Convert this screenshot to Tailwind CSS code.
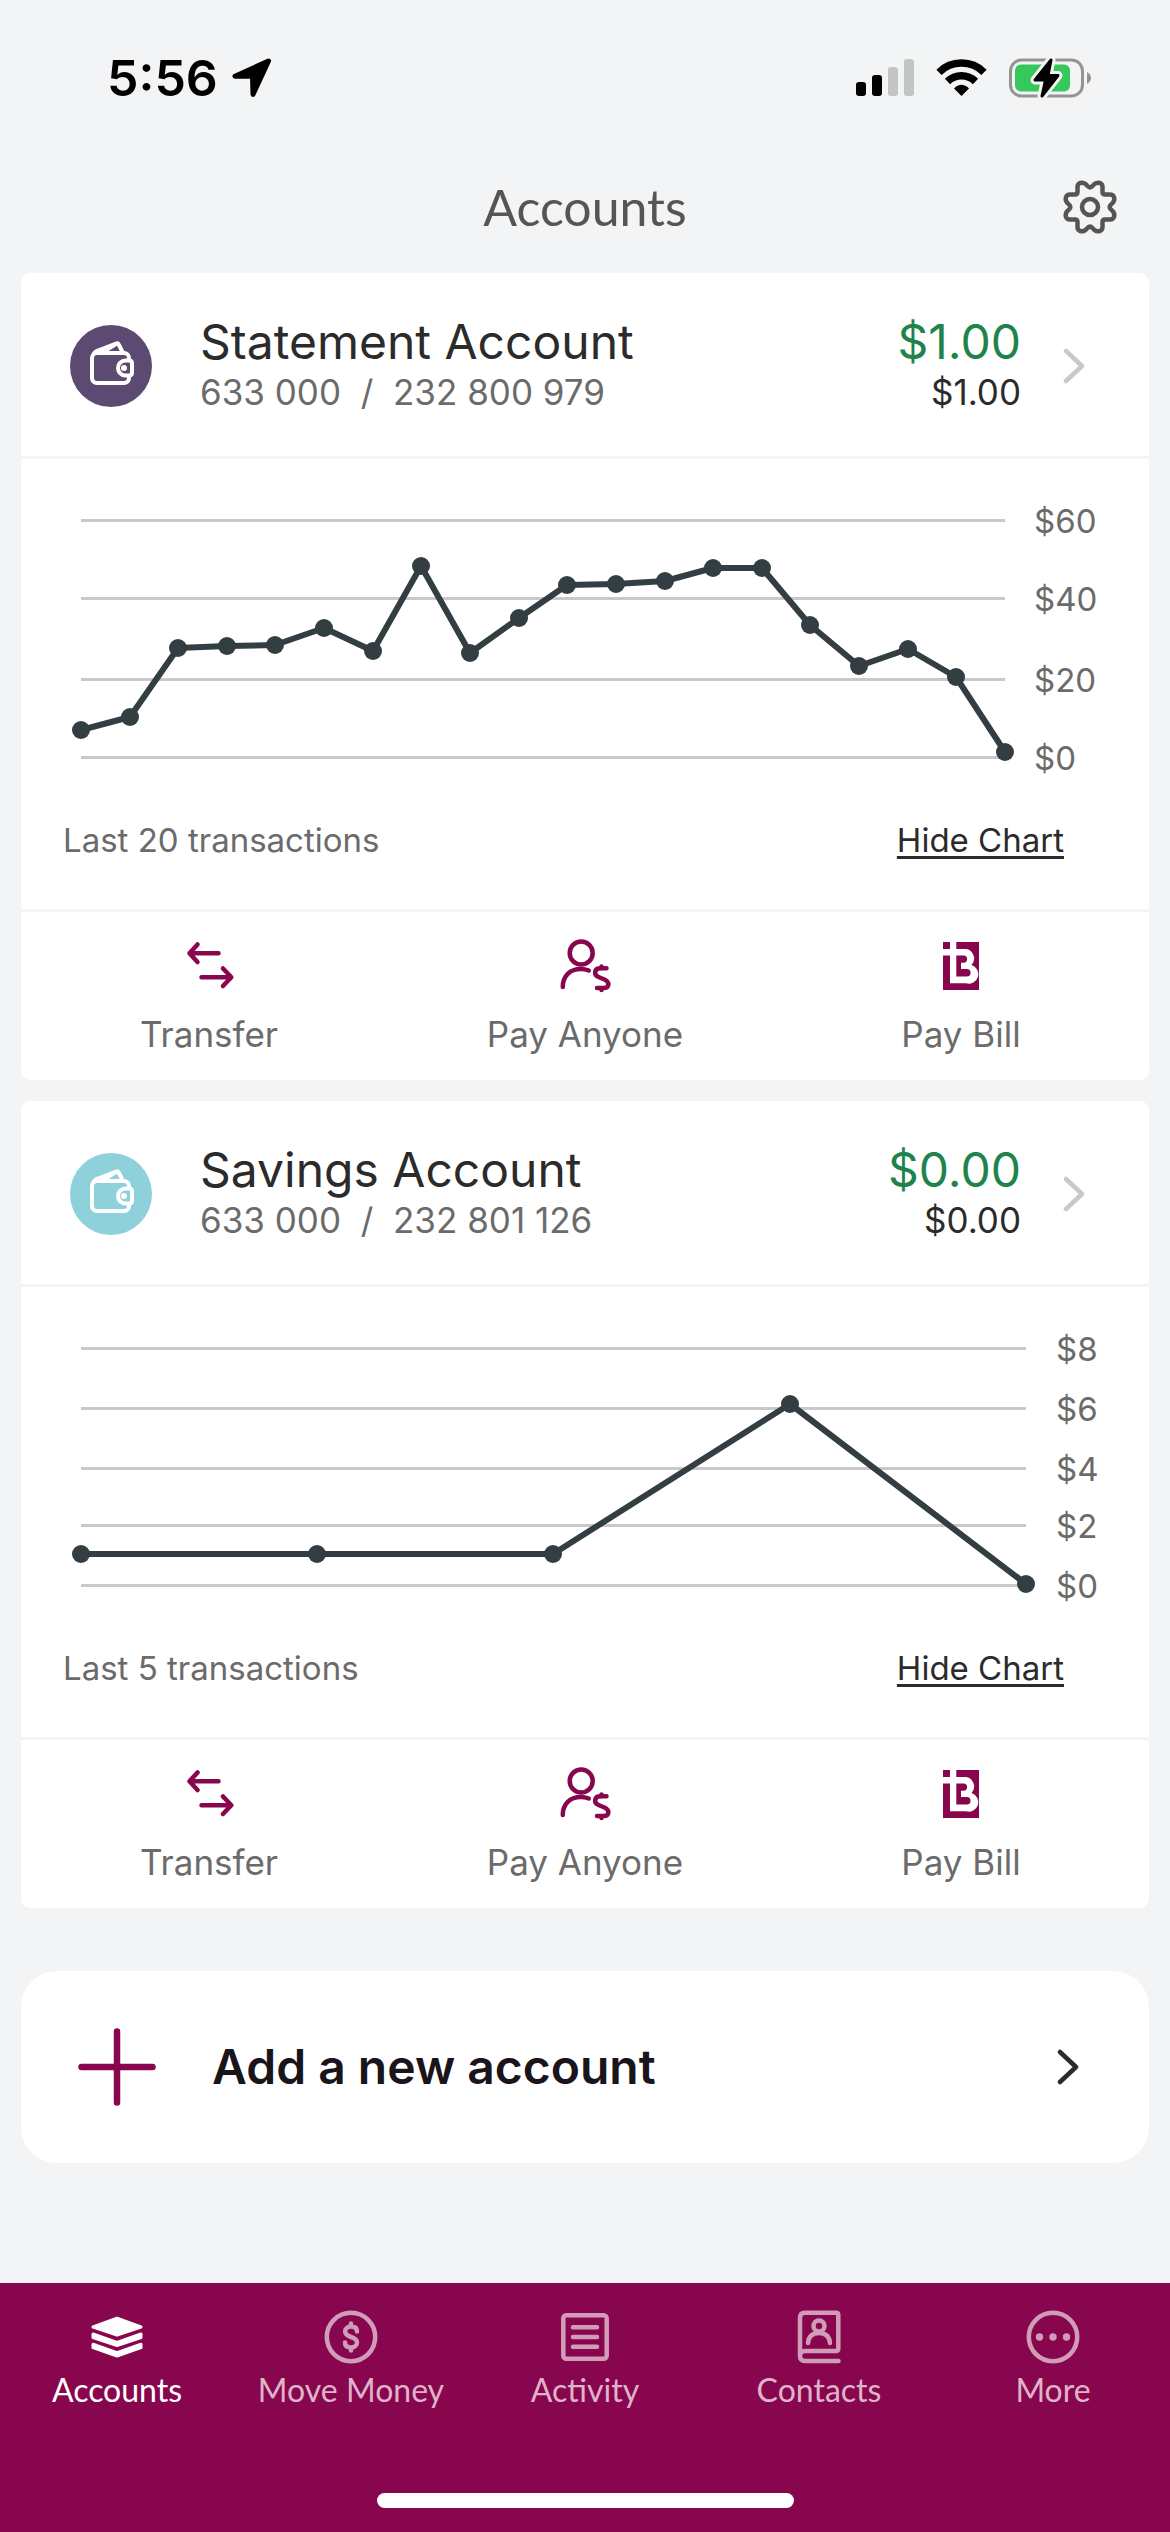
<!DOCTYPE html>
<html lang="en">
<head>
    <meta charset="UTF-8">
    <meta name="viewport" content="width=device-width, initial-scale=1.0">
    <title>Accounts</title>
    <script src="https://cdn.jsdelivr.net/npm/@tailwindcss/browser@4"></script>
</head>
<body class="bg-[#f3f4f6] font-['Inter',sans-serif] text-[#2b2b2b] min-h-screen flex flex-col">
    <!-- Shared icons -->
    <svg class="absolute w-0 h-0" aria-hidden="true">
        <symbol id="wallet" viewBox="0 0 82 82">
            <g fill="none" stroke="#fff" stroke-width="4" stroke-linecap="round" stroke-linejoin="round">
                <path d="M59 35v-2a5 5 0 0 0-5-5H27a5 5 0 0 0-5 5v20a5 5 0 0 0 5 5h27a5 5 0 0 0 5-5v-2"/>
                <path d="M24 28.5q1-2 4-3L46 18.5q2-1 3 1.5L53 28M33 27L46 19"/>
                <path d="M59 35.5h-3.500a7.500 7.500 0 0 0 0 15H59q3 0 3-3v-9q0-3-3-3z"/>
            </g>
            <circle cx="54" cy="43" r="3" fill="#fff"/>
        </symbol>
        <symbol id="transfer" viewBox="0 0 54 54">
            <path d="M36.5 14.3H7.5M15.5 5.5L7.5 14.3l8 8.7M19.5 38.3h29.5M41 29.5l8.3 8.8-8.3 8.7" fill="none" stroke="currentColor" stroke-width="4.5" stroke-linecap="round" stroke-linejoin="round"/>
        </symbol>
        <symbol id="pay-anyone" viewBox="0 0 54 54">
            <g fill="none" stroke="currentColor" stroke-width="4.5" stroke-linecap="round">
                <circle cx="23.2" cy="14" r="11.5"/>
                <path d="M4.8 48C4.8 37 12 30 22.8 30q4.2 0 8 1.5"/>
                <path d="M48.5 29.3h-6C36 29.3 35.5 36 40.5 38l6 2.5c5.5 2.5 5 8.5-1 8.5h-6.5M43.5 27.5v2M43.5 49v2"/>
            </g>
        </symbol>
        <symbol id="bpay" viewBox="0 0 36 48">
            <path d="M0 0h36v48H0z" fill="currentColor"/>
            <path d="M7 0h6.3v7H21a9 9.5 0 0 1 7.5 16A9.5 9.5 0 0 1 23 41.3H7V13.5H0V7h7z" fill="#fff"/>
            <path d="M13.3 13.5H20.5a3.6 3.6 0 0 1 0 7.2H18V27h5.8a3.7 3.7 0 0 1 0 7.5H13.3z" fill="currentColor"/>
        </symbol>
        <marker id="dot" viewBox="0 0 18 18" refX="9" refY="9" markerWidth="18" markerHeight="18" markerUnits="userSpaceOnUse">
            <circle cx="9" cy="9" r="9" fill="#323e42"/>
        </marker>
    </svg>

    <!-- Status bar -->
    <div class="h-[156px] pl-[107px] pr-[78px] flex items-center text-black">
        <span class="text-[50px] leading-none font-semibold">5:56</span>
        <svg class="ml-[14px] w-10 h-10" viewBox="0 0 40 40"><path d="M36.5 3L3 18.2h17.5L21 36.5z" stroke="#000" stroke-width="5" stroke-linejoin="round"/></svg>
        <div class="ml-auto flex items-center gap-[21px]">
            <svg class="w-[59px] h-[38px]" viewBox="0 0 59 38">
                <rect y="23" width="10" height="14" rx="3"/>
                <rect x="16" y="16" width="10" height="21" rx="3"/>
                <rect x="32" y="8" width="10" height="29" rx="3" fill="#c3c4c4"/>
                <rect x="48" width="10" height="37" rx="3" fill="#c3c4c4"/>
            </svg>
            <svg class="w-[51px] h-[38px]" viewBox="0 0 51 38">
                <path d="M3 13.3A32 32 0 0 1 48 13.3M11.5 22.5A20 20 0 0 1 39.5 22.5" fill="none" stroke="#000" stroke-width="7.5"/>
                <path d="M18 29.5q7.5-7.5 15 0L25.5 37z"/>
            </svg>
            <svg class="w-[84px] h-[42px]" viewBox="0 0 84 42">
                <rect x="2.5" y="3" width="72" height="36" rx="11" fill="none" stroke="#949494" stroke-width="3"/>
                <rect x="7" y="7.5" width="55" height="27" rx="6" fill="#36c85a"/>
                <path d="M79 15q4 2.5 4 6t-4 6z" fill="#949494"/>
                <path d="M43 3L27 23h10.5L34 39 50 18.5H40z" fill="#f3f4f6" stroke="#f3f4f6" stroke-width="9" stroke-linejoin="round"/>
                <path d="M43 3L27 23h10.5L34 39 50 18.5H40z" stroke="#000" stroke-width="3" stroke-linejoin="round"/>
            </svg>
        </div>
    </div>

    <!-- Title -->
    <header class="h-[102px] mb-[15px] px-[52px] grid grid-cols-[1fr_auto_1fr] items-center text-[#555]">
        <h1 class="col-start-2 font-['Lato',sans-serif] text-[50px] leading-[60px]">Accounts</h1>
        <button type="button" aria-label="Settings" class="justify-self-end">
            <svg class="w-[56px] h-[56px]" viewBox="-28 -28 56 56" fill="none" stroke="currentColor" stroke-width="4.5">
                <path d="M-2.5-21Q0-18.5 2.5-21L4.5-23Q7-25 10-24 12.5-23 12.5-20V-15Q12.5-12.5 15-12.5H20Q23-12.5 24-10 25-7 23-4.5L21-2.5Q18.5 0 21 2.5L23 4.5Q25 7 24 10 23 12.5 20 12.5H15Q12.5 12.5 12.5 15V20Q12.5 23 10 24 7 25 4.5 23L2.5 21Q0 18.5-2.5 21L-4.5 23Q-7 25-10 24-12.5 23-12.5 20V15Q-12.5 12.5-15 12.5H-20Q-23 12.5-24 10-25 7-23 4.5L-21 2.5Q-18.5 0-21-2.5L-23-4.5Q-25-7-24-10-23-12.5-20-12.5H-15Q-12.5-12.5-12.5-15V-20Q-12.5-23-10-24-7-25-4.5-23Z"/>
                <circle r="8"/>
            </svg>
        </button>
    </header>

    <main class="px-[21px] flex flex-col gap-[21px]">
        <!-- Statement account -->
        <section class="bg-white rounded-[9px] divide-y-[3px] divide-[#f3f4f6]">
            <a href="#statement" class="flex items-center pl-[49px] pr-[64px] pt-[43px] pb-10">
                <span class="w-[82px] h-[82px] rounded-full bg-[#5d4a72]"><svg class="w-full h-full"><use href="#wallet"/></svg></span>
                <span class="ml-12 flex-1">
                    <span class="block text-[48px] leading-[52px]">Statement Account</span>
                    <span class="block text-[35px] leading-[48px] text-[#6b6b6b] whitespace-pre">633 000  /  232 800 979</span>
                </span>
                <span class="text-right">
                    <span class="block text-[48px] leading-[52px] text-[#1e844c]">$1.00</span>
                    <span class="block text-[35px] leading-[48px]">$1.00</span>
                </span>
                <svg class="ml-[42px] w-[22px] h-[36px]" viewBox="0 0 22 36"><path d="M3 3l16 15L3 33" fill="none" stroke="#c9c9c9" stroke-width="4.5" stroke-linecap="round" stroke-linejoin="round"/></svg>
            </a>
            <div>
                <svg class="block w-full" viewBox="0 0 1128 330" role="img" aria-label="Balance over the last 20 transactions">
                    <path d="M60 61.5h924M60 139.5h924M60 220.5h924M60 298.5h924" stroke="#c9c9c9" stroke-width="3"/>
                    <polyline points="60,271 109,258 157,189 206,187 254,186 303,169 352,192 400,107 449,194 498,159 546,126 595,125 644,122 692,109 741,109 789,166 838,207 887,190 935,218 984,293" fill="none" stroke="#323e42" stroke-width="6" stroke-linejoin="round" marker-start="url(#dot)" marker-mid="url(#dot)" marker-end="url(#dot)"/>
                    <g font-size="33" fill="#6b6b6b">
                        <text x="1013" y="74">$60</text>
                        <text x="1013" y="152">$40</text>
                        <text x="1013" y="233">$20</text>
                        <text x="1013" y="311">$0</text>
                    </g>
                </svg>
                <div class="flex justify-between pl-[42px] pr-[85px] pt-[27px] pb-[45px] text-[33px] leading-[48px]">
                    <span class="text-[#6b6b6b]">Last 20 transactions</span>
                    <button type="button" class="underline decoration-[3px] underline-offset-[4px]">Hide Chart</button>
                </div>
            </div>
            <div class="grid grid-cols-3 pt-[27px] pb-[22px] text-[35px] leading-[48px] text-[#6b6b6b]">
                <button type="button" class="flex flex-col items-center gap-[17px]"><svg class="w-[54px] h-[54px] text-[#88064d]"><use href="#transfer"/></svg>Transfer</button>
                <button type="button" class="flex flex-col items-center gap-[17px]"><svg class="w-[54px] h-[54px] text-[#88064d]"><use href="#pay-anyone"/></svg>Pay Anyone</button>
                <button type="button" class="flex flex-col items-center gap-[17px]"><svg class="w-9 h-12 my-[3px] text-[#88064d]"><use href="#bpay"/></svg>Pay Bill</button>
            </div>
        </section>

        <!-- Savings account -->
        <section class="bg-white rounded-[9px] divide-y-[3px] divide-[#f3f4f6]">
            <a href="#savings" class="flex items-center pl-[49px] pr-[64px] pt-[43px] pb-10">
                <span class="w-[82px] h-[82px] rounded-full bg-[#8fd1da]"><svg class="w-full h-full"><use href="#wallet"/></svg></span>
                <span class="ml-12 flex-1">
                    <span class="block text-[48px] leading-[52px]">Savings Account</span>
                    <span class="block text-[35px] leading-[48px] text-[#6b6b6b] whitespace-pre">633 000  /  232 801 126</span>
                </span>
                <span class="text-right">
                    <span class="block text-[48px] leading-[52px] text-[#1e844c]">$0.00</span>
                    <span class="block text-[35px] leading-[48px]">$0.00</span>
                </span>
                <svg class="ml-[42px] w-[22px] h-[36px]" viewBox="0 0 22 36"><path d="M3 3l16 15L3 33" fill="none" stroke="#c9c9c9" stroke-width="4.5" stroke-linecap="round" stroke-linejoin="round"/></svg>
            </a>
            <div>
                <svg class="block w-full" viewBox="0 0 1128 330" role="img" aria-label="Balance over the last 5 transactions">
                    <path d="M60 61.5h945M60 121.5h945M60 181.5h945M60 238.5h945M60 298.5h945" stroke="#c9c9c9" stroke-width="3"/>
                    <polyline points="60,267 296,267 532,267 769,117 1005,297" fill="none" stroke="#323e42" stroke-width="6" stroke-linejoin="round" marker-start="url(#dot)" marker-mid="url(#dot)" marker-end="url(#dot)"/>
                    <g font-size="33" fill="#6b6b6b">
                        <text x="1035" y="74">$8</text>
                        <text x="1035" y="134">$6</text>
                        <text x="1035" y="194">$4</text>
                        <text x="1035" y="251">$2</text>
                        <text x="1035" y="311">$0</text>
                    </g>
                </svg>
                <div class="flex justify-between pl-[42px] pr-[85px] pt-[27px] pb-[45px] text-[33px] leading-[48px]">
                    <span class="text-[#6b6b6b]">Last 5 transactions</span>
                    <button type="button" class="underline decoration-[3px] underline-offset-[4px]">Hide Chart</button>
                </div>
            </div>
            <div class="grid grid-cols-3 pt-[27px] pb-[22px] text-[35px] leading-[48px] text-[#6b6b6b]">
                <button type="button" class="flex flex-col items-center gap-[17px]"><svg class="w-[54px] h-[54px] text-[#88064d]"><use href="#transfer"/></svg>Transfer</button>
                <button type="button" class="flex flex-col items-center gap-[17px]"><svg class="w-[54px] h-[54px] text-[#88064d]"><use href="#pay-anyone"/></svg>Pay Anyone</button>
                <button type="button" class="flex flex-col items-center gap-[17px]"><svg class="w-9 h-12 my-[3px] text-[#88064d]"><use href="#bpay"/></svg>Pay Bill</button>
            </div>
        </section>

        <!-- Add account -->
        <button type="button" class="mt-[42px] bg-white rounded-[36px] flex items-center pl-[57px] pr-[70px] py-[57px] text-[48px] leading-[60px] font-semibold text-[#1a151a]">
            <svg class="w-[78px] h-[78px]" viewBox="0 0 78 78"><path d="M39 3.5v71M3.5 39h71" stroke="#88064d" stroke-width="6.5" stroke-linecap="round"/></svg>
            <span class="ml-[56px]">Add a new account</span>
            <svg class="ml-auto w-[22px] h-[36px]" viewBox="0 0 22 36"><path d="M3 3l16 15L3 33" fill="none" stroke="#2b2b2b" stroke-width="4.5" stroke-linecap="round" stroke-linejoin="round"/></svg>
        </button>
    </main>

    <!-- Tab bar -->
    <nav class="mt-auto bg-[#88064d] pt-[27px] pb-6 font-['Lato',sans-serif] text-[32px] leading-[40px]">
        <div class="grid grid-cols-5 text-[#dfb3ca]">
            <a href="#accounts" aria-current="page" class="flex flex-col items-center gap-[6px] text-white">
                <svg class="w-[54px] h-[54px]" viewBox="0 0 54 54" fill="currentColor" stroke="currentColor" stroke-width="3" stroke-linejoin="round">
                    <path d="M27 8.2L51 17 27 25.2 3 17z"/>
                    <path d="M3 24l24 8.5L51 24v3.5L27 35.5 3 27.5z"/>
                    <path d="M3 34.2l24 8.5 24-8.5v3.5L27 46 3 37.7z"/>
                </svg>
                Accounts
            </a>
            <a href="#move" class="flex flex-col items-center gap-[6px]">
                <svg class="w-[54px] h-[54px] text-[#d09cb8]" viewBox="0 0 54 54" fill="none" stroke="currentColor" stroke-width="4.5" stroke-linecap="round">
                    <circle cx="27" cy="27" r="24.2"/>
                    <path d="M33 21.5c0-3.5-2.5-5-6-5s-5.800 2-5.800 5c0 7 11.800 4 11.800 11 0 3-2.300 5-6 5s-6-1.700-6-5M27 13.5v2.500M27 38v2.500"/>
                </svg>
                Move Money
            </a>
            <a href="#activity" class="flex flex-col items-center gap-[6px]">
                <svg class="w-[54px] h-[54px] text-[#d09cb8]" viewBox="0 0 54 54" fill="none" stroke="currentColor" stroke-width="4.5" stroke-linecap="round">
                    <rect x="5.3" y="5.3" width="43.4" height="43.4" rx="3"/>
                    <path d="M15 17.3h24M15 27h24M15 36.7h24"/>
                </svg>
                Activity
            </a>
            <a href="#contacts" class="flex flex-col items-center gap-[6px]">
                <svg class="w-[54px] h-[54px] text-[#d09cb8]" viewBox="0 0 54 54" fill="none" stroke="currentColor" stroke-width="4.5" stroke-linecap="round" stroke-linejoin="round">
                    <path d="M8 46V8q0-5.200 5-5.200h31q2.300 0 2.300 2.200v33.800q0 2.200-2.300 2.200H13q-5 0-5 5t5 5h33.500"/>
                    <circle cx="27" cy="16" r="5.5"/>
                    <path d="M16 33q1-10 11-10t11 10"/>
                </svg>
                Contacts
            </a>
            <a href="#more" class="flex flex-col items-center gap-[6px]">
                <svg class="w-[54px] h-[54px] text-[#d09cb8]" viewBox="0 0 54 54" fill="currentColor">
                    <circle cx="27" cy="27" r="24.2" fill="none" stroke="currentColor" stroke-width="4.5"/>
                    <circle cx="13.5" cy="27" r="3.7"/>
                    <circle cx="27" cy="27" r="3.7"/>
                    <circle cx="40.5" cy="27" r="3.7"/>
                </svg>
                More
            </a>
        </div>
        <div class="mt-[83px] mx-auto w-[417px] h-[15px] rounded-full bg-white"></div>
    </nav>
</body>
</html>
